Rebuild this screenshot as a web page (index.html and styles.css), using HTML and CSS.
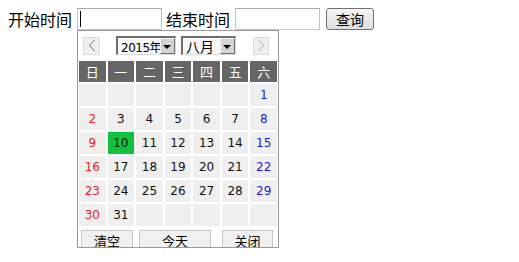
FILE: index.html
```html
<!DOCTYPE html>
<html lang="zh-CN">
<head>
  <meta charset="UTF-8" />
  <title>查询</title>
  <link rel="stylesheet" href="styles.css">
</head>
<body>
  <div class="barra">
    <label class="etiqueta">开始时间</label>
    <span class="campo">
      <input type="text" class="texto">
      <span class="cursor"></span>
    </span>
    <label class="etiqueta">结束时间</label>
    <input type="text" class="texto">
    <button class="consultar">查询</button>
  </div>

  <!-- calendario desplegado bajo la fecha de inicio -->
  <div class="calendario">
    <div class="cal-top">
      <span class="nav prev">
        <svg width="8" height="13" viewBox="0 0 8 13"><polyline points="6.5,1 1.5,6.5 6.5,12" fill="none" stroke="#6a6a6a" stroke-width="1"/></svg>
      </span>
      <span class="sel anio">2015年<span class="flecha"></span></span>
      <span class="sel mes">八月<span class="flecha"></span></span>
      <span class="nav next">
        <svg width="8" height="13" viewBox="0 0 8 13"><polyline points="1.5,1 6.5,6.5 1.5,12" fill="none" stroke="#a8a8a8" stroke-width="1"/></svg>
      </span>
    </div>
    <div class="dias" id="dias">
      <div class="cab">日</div><div class="cab">一</div><div class="cab">二</div><div class="cab">三</div><div class="cab">四</div><div class="cab">五</div><div class="cab">六</div>
    </div>
    <div class="pie">
      <button class="pie-btn limpiar">清空</button>
      <button class="pie-btn hoy">今天</button>
      <button class="pie-btn cerrar">关闭</button>
    </div>
  </div>

  <script>
    // agosto 2015: empieza en sábado, 31 días, hoy = 10
    const contenedor = document.getElementById('dias');
    const inicio = 6, total = 31, hoy = 10;
    for (let i = 0; i < 42; i++) {
      const d = i - inicio + 1;
      const celda = document.createElement('div');
      celda.className = 'dia';
      if (d >= 1 && d <= total) {
        celda.textContent = d;
        if (i % 7 === 0) celda.classList.add('domingo');
        if (i % 7 === 6) celda.classList.add('sabado');
        if (d === hoy) celda.classList.add('hoy-dia');
      }
      contenedor.appendChild(celda);
    }
  </script>
</body>
</html>
```

FILE: styles.css
```css
body {
  margin: 8px;
  font-family: "Noto Sans CJK SC", sans-serif;
  background: #ffffff;
  color: #000;
}
.barra {
  display: flex;
  align-items: center;
  height: 22px;
}
.etiqueta {
  font-size: 16px;
  line-height: 22px;
}
.campo {
  position: relative;
  display: block;
  margin-left: 5px;
  margin-right: 4px;
}
.texto {
  display: block;
  box-sizing: border-box;
  width: 85px;
  height: 22px;
  margin: 0;
  padding: 0 3px;
  border: 1px solid #c4c4c4;
  border-top-color: #a8a8a8;
  outline: none;
  background: #fff;
}
.barra > .texto {
  margin-left: 5px;
}
.cursor {
  position: absolute;
  left: 3px;
  top: 3px;
  width: 1px;
  height: 16px;
  background: #000;
}
.consultar {
  box-sizing: border-box;
  width: 48px;
  height: 22px;
  margin-left: 6px;
  padding: 0;
  border: 1px solid #707070;
  border-radius: 3px;
  background: linear-gradient(#f6f6f6, #dedede);
  font-family: "Noto Sans CJK SC", sans-serif;
  font-size: 14px;
  color: #000;
}

.calendario {
  box-sizing: border-box;
  width: 202px;
  height: 218px;
  margin-left: 69px;
  overflow: hidden;
  border: 1px solid #9a9a9a;
  background: #fff;
}
.cal-top {
  display: flex;
  align-items: center;
  height: 29px;
  padding-left: 5px;
}
.nav {
  display: flex;
  align-items: center;
  justify-content: center;
  box-sizing: border-box;
  width: 17px;
  height: 18px;
  border: 1px solid #dcdcdc;
  background: #efefef;
}
.next {
  margin-left: 17px;
  width: 16px;
}
.sel {
  position: relative;
  display: flex;
  align-items: center;
  box-sizing: border-box;
  height: 19px;
  padding-left: 3px;
  border: 1px solid #dcdcdc;
  border-top: 2px solid #6e6e6e;
  border-left: 2px solid #6e6e6e;
  background: #f7f7f7;
  color: #000;
}
.anio {
  width: 60px;
  margin-left: 16px;
  font-size: 12px;
  font-family: "DejaVu Sans", "Noto Sans CJK SC", sans-serif;
  letter-spacing: -0.5px;
}
.mes {
  width: 55px;
  margin-left: 5px;
  font-size: 14px;
}
.flecha {
  position: absolute;
  right: 0;
  top: 0;
  box-sizing: border-box;
  width: 15px;
  height: 16px;
  border: 1px solid #6e6e6e;
  border-top-color: #f4f4f4;
  border-left-color: #f4f4f4;
  background: #d4d4d4;
}
.flecha::after {
  content: "";
  position: absolute;
  left: 2px;
  top: 6px;
  border-left: 4px solid transparent;
  border-right: 4px solid transparent;
  border-top: 4px solid #000;
}

.dias {
  display: grid;
  grid-template-columns: repeat(7, 1fr);
  grid-auto-rows: 22px;
  grid-template-rows: 21px;
  gap: 2px;
  padding: 1px;
}
.cab {
  display: flex;
  align-items: center;
  justify-content: center;
  background: #656565;
  color: #fff;
  font-size: 13px;
}
.dia {
  display: flex;
  align-items: center;
  justify-content: center;
  background: #efefef;
  font-family: "DejaVu Sans", sans-serif;
  font-size: 12px;
  color: #111;
}
.domingo {
  color: #e8232a;
}
.sabado {
  color: #1c1cc8;
}
.hoy-dia {
  background: #12c23c;
}

.pie {
  display: flex;
  margin-top: 3px;
  padding-left: 3px;
}
.pie-btn {
  box-sizing: border-box;
  height: 20px;
  padding: 0;
  border: 1px solid #c8c8c8;
  background: #f0f0f0;
  font-family: "Noto Sans CJK SC", sans-serif;
  font-size: 13px;
  line-height: 17px;
  color: #000;
}
.limpiar {
  width: 52px;
}
.hoy {
  width: 72px;
  margin-left: 6px;
}
.cerrar {
  width: 51px;
  margin-left: 11px;
}
```
